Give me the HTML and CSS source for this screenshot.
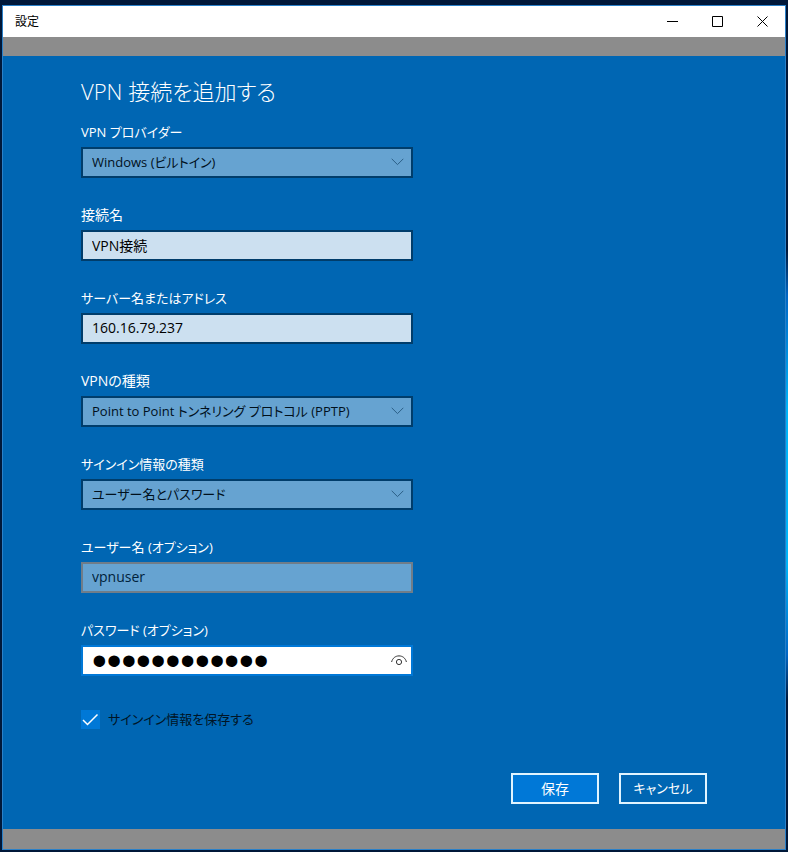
FILE: index.html
```html
<!DOCTYPE html>
<html lang="ja">
<head>
  <meta charset="UTF-8">
  <meta name="viewport" content="width=device-width, initial-scale=1.0">
  <title>設定</title>
  <link rel="stylesheet" href="styles.css">
</head>
<body>
  <div class="window">
    <header class="titlebar">
      <span class="name">設定</span>
      <div class="controls">
        <button type="button" aria-label="最小化">
          <svg width="11" height="11" viewBox="0 0 11 11"><path d="M0 5.5h11"/></svg>
        </button>
        <button type="button" aria-label="最大化">
          <svg width="11" height="11" viewBox="0 0 11 11"><path d="M.5.5h10v10H.5z"/></svg>
        </button>
        <button type="button" aria-label="閉じる">
          <svg width="11" height="11" viewBox="0 0 11 11"><path d="M.5.5l10 10M10.5.5l-10 10"/></svg>
        </button>
      </div>
    </header>
    <main>
      <form class="panel">
        <h1>VPN 接続を追加する</h1>

        <div class="field">
          <label class="kana" for="provider">VPN プロバイダー</label>
          <div class="box">
            <select id="provider" class="kana">
              <option>Windows (ビルトイン)</option>
            </select>
            <svg class="arrow" width="13" height="8" viewBox="0 0 13 8"><path d="M.7.8L6.500 6.600L12.300.8"/></svg>
          </div>
        </div>

        <div class="field">
          <label for="connection">接続名</label>
          <input id="connection" type="text" value="VPN接続">
        </div>

        <div class="field">
          <label class="kana" for="server">サーバー名またはアドレス</label>
          <input id="server" type="text" value="160.16.79.237">
        </div>

        <div class="field">
          <label for="vpnType">VPNの種類</label>
          <div class="box">
            <select id="vpnType" class="kana">
              <option>Point to Point トンネリング プロトコル (PPTP)</option>
            </select>
            <svg class="arrow" width="13" height="8" viewBox="0 0 13 8"><path d="M.7.8L6.500 6.600L12.300.8"/></svg>
          </div>
        </div>

        <div class="field">
          <label class="kana" for="signin">サインイン情報の種類</label>
          <div class="box">
            <select id="signin" class="kana">
              <option>ユーザー名とパスワード</option>
            </select>
            <svg class="arrow" width="13" height="8" viewBox="0 0 13 8"><path d="M.7.8L6.500 6.600L12.300.8"/></svg>
          </div>
        </div>

        <div class="field">
          <label class="kana" for="user">ユーザー名 (オプション)</label>
          <input id="user" class="hover" type="text" value="vpnuser">
        </div>

        <div class="field">
          <label class="kana" for="password">パスワード (オプション)</label>
          <div class="box">
            <input id="password" class="active" type="password" value="vpnpassword1">
            <button type="button" class="reveal" aria-label="パスワードを表示">
              <svg width="16" height="11" viewBox="0 0 16 11">
                <path d="M.6 7C1.600 3 4.500.9 8 .9S14.400 3 15.400 7"/>
                <circle cx="8" cy="7" r="2.600"/>
              </svg>
            </button>
          </div>
        </div>

        <label class="remember kana">
          <input type="checkbox" checked>
          <svg class="tick" width="19" height="19" viewBox="0 0 19 19"><path d="M2 10l4.500 4.500L16.500 4.500"/></svg>
          <span>サインイン情報を保存する</span>
        </label>

        <div class="buttons">
          <button type="submit" class="save">保存</button>
          <button type="button" class="kana">キャンセル</button>
        </div>
      </form>
    </main>
  </div>
</body>
</html>
```
FILE: styles.css
```css
* {
  box-sizing: border-box;
}
body {
  margin: 0;
  min-height: 100vh;
  padding: 5px 2px 2px;
  display: flex;
  background: linear-gradient(#001839, #0066c4 10%, #00b4f8 35%, #00b4f8 70%, #0066c4 90%, #001839) right 250px / 2px 450px no-repeat, #001839;
  font-family: "Open Sans", "Noto Sans CJK JP", sans-serif;
  font-size: 14px;
  font-feature-settings: "palt";
}
button, input, select {
  font: inherit;
  font-feature-settings: inherit;
  border-radius: 0;
  outline: none;
}
svg {
  fill: none;
  stroke: currentColor;
}

/* ウィンドウ */
.window {
  flex: 1;
  display: flex;
  flex-direction: column;
  border: 1px solid #2a80c8;
}
.titlebar {
  height: 31px;
  display: flex;
  align-items: center;
  justify-content: space-between;
  padding-left: 12px;
  background: #fff;
  color: #000;
  font-size: 12px;
}
.name {
  padding-bottom: 2px;
}
.controls {
  display: flex;
  height: 100%;
}
.controls button {
  width: 45px;
  padding: 0;
  border: none;
  background: none;
  display: flex;
  align-items: center;
  justify-content: center;
}
main {
  flex: 1;
  display: flex;
  padding: 19px 0 20px;
  background: #8c8c8c;
}
.panel {
  flex: 1;
  display: flex;
  flex-direction: column;
  padding: 20px 78px 25px;
  background: #0066b3;
  color: #fff;
}
h1 {
  margin: 0 0 17px;
  font-size: 22px;
  font-weight: 300;
  line-height: 30px;
}

/* 入力欄 */
.field {
  width: 100%;
  max-width: 332px;
  margin-bottom: 28px;
}
.field label {
  display: block;
  margin-bottom: 6px;
  line-height: 18px;
}
.field input, .field select {
  display: block;
  width: 100%;
  height: 31px;
  padding: 0 9px 2px;
  border: 2px solid #003d6b;
  background: #cce0f0;
  color: #000;
}
.field select {
  appearance: none;
  background: #66a3d1;
  color: #00101c;
}
/* カナの多い文字列は少し小さく */
.panel .kana {
  font-size: 13px;
}
.field .hover {
  background: #66a3d1;
  border-color: #707d89;
  color: #00223b;
}
.field .active {
  padding-bottom: 0;
  background: #fff;
  border-color: #0078d7;
  font-family: "Liberation Sans", sans-serif;
  font-size: 42px;
}
.box {
  position: relative;
}
.arrow {
  position: absolute;
  top: 11px;
  right: 9px;
  color: #2c5f86;
  pointer-events: none;
}
.reveal {
  position: absolute;
  top: 2px;
  right: 2px;
  width: 25px;
  height: 27px;
  padding: 0;
  border: none;
  background: none;
  color: #333;
  display: flex;
  align-items: center;
  justify-content: center;
}

.remember {
  position: relative;
  display: flex;
  align-items: center;
  gap: 8px;
  height: 30px;
  color: #001526;
}
.remember input {
  appearance: none;
  width: 19px;
  height: 19px;
  margin: 0;
  background: #0078d7;
}
.remember span {
  padding-bottom: 2px;
}
.tick {
  position: absolute;
  left: 0;
  color: #fff;
  stroke-width: 1.500;
  pointer-events: none;
}

/* ボタン */
.buttons {
  margin-top: auto;
  display: flex;
  justify-content: flex-end;
  gap: 20px;
}
.buttons button {
  width: 88px;
  height: 31px;
  padding: 0 0 2px;
  border: 2px solid #e0f4ff;
  background: #0066b3;
  color: #fff;
}
.buttons .save {
  background: #0078d7;
}
```
